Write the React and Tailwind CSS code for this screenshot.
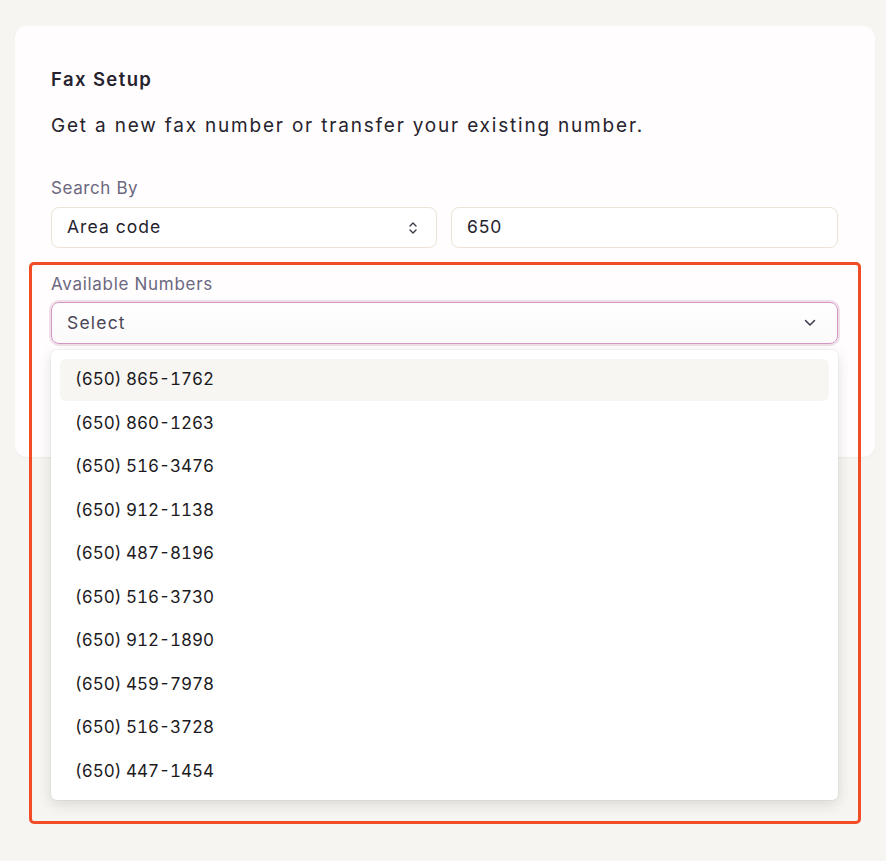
import React from "react";

const numbers = [
  "(650) 865-1762",
  "(650) 860-1263",
  "(650) 516-3476",
  "(650) 912-1138",
  "(650) 487-8196",
  "(650) 516-3730",
  "(650) 912-1890",
  "(650) 459-7978",
  "(650) 516-3728",
  "(650) 447-1454",
];

export default function App() {
  return (
    <div
      className="min-h-[861px] w-full bg-[#f6f5f1] pt-[26px] pl-[15px]"
      style={{ fontFamily: "Inter, 'Noto Sans', sans-serif" }}
    >
      <div className="relative h-[431px] w-[860px] rounded-[12px] bg-[#fffdfd] px-[36px] pt-[40px] shadow-[0_1px_2px_rgba(0,0,0,0.04)]">
        <h2 className="text-[18.5px] font-semibold leading-[26px] text-[#26232e] tracking-[1.4px]">Fax Setup</h2>
        <p className="mt-[21px] text-[19px] leading-[26px] text-[#26232e] tracking-[1.8px]">
          Get a new fax number or transfer your existing number.
        </p>

        <div className="mt-[38px] text-[17px] leading-[22px] text-[#6b6880] tracking-[0.6px]">Search By</div>
        <div className="mt-[8px] flex gap-[14px]">
          <div className="flex h-[41px] w-[386px] items-center justify-between rounded-[8px] border border-[#ebe4d6] bg-white pl-[15px] pr-[18px]">
            <span className="text-[17.5px] text-[#26232e] tracking-[1.05px]">Area code</span>
            <svg width="10" height="14" viewBox="0 0 10 14" fill="none" stroke="#3b3848" strokeWidth="1.4" strokeLinecap="round" strokeLinejoin="round">
              <path d="M2 5 L5 2 L8 5" />
              <path d="M2 9 L5 12 L8 9" />
            </svg>
          </div>
          <div className="flex h-[41px] w-[387px] items-center rounded-[8px] border border-[#ebe4d6] bg-white pl-[15px]">
            <span className="text-[17.5px] text-[#26232e] tracking-[0.9px]">650</span>
          </div>
        </div>

        <div className="mt-[25px] text-[17px] leading-[22px] text-[#6b6880] tracking-[0.7px]">Available Numbers</div>
        <div className="mt-[7px] flex h-[42px] w-[787px] items-center justify-between rounded-[8px] border border-[#d497c4] bg-gradient-to-b from-white to-[#fbf9f9] pl-[15px] pr-[21px] shadow-[0_0_0_2px_#efe0e8]">
          <span className="text-[17.5px] text-[#4a4757] tracking-[1.2px]">Select</span>
          <svg width="12" height="8" viewBox="0 0 12 8" fill="none" stroke="#3b3848" strokeWidth="1.5" strokeLinecap="round" strokeLinejoin="round">
            <path d="M1.5 1.5 L6 6 L10.5 1.5" />
          </svg>
        </div>

        <div className="absolute left-[36px] top-[324px] z-10 w-[787px] rounded-[6px] bg-white px-[9px] pt-[8px] pb-[7px] shadow-[0_4px_14px_rgba(0,0,0,0.12),0_0_0_1px_rgba(0,0,0,0.03)]">
          {numbers.map((n, i) => (
            <div key={n} className="h-[43.5px] py-[0.75px]">
              <div
                className={
                  i === 0
                    ? "flex h-full items-center rounded-[6px] bg-[#f7f6f2] pl-[15px] text-[17px] tabular-nums text-[#1c1a22]"
                    : "flex h-full items-center rounded-[6px] pl-[15px] text-[17px] tabular-nums text-[#1c1a22]"
                }
              >
                {n}
              </div>
            </div>
          ))}
        </div>

        <div className="pointer-events-none absolute left-[14px] top-[236px] z-20 h-[562px] w-[832px] rounded-[5px] border-[3px] border-[#f24c27]" />
      </div>
    </div>
  );
}
